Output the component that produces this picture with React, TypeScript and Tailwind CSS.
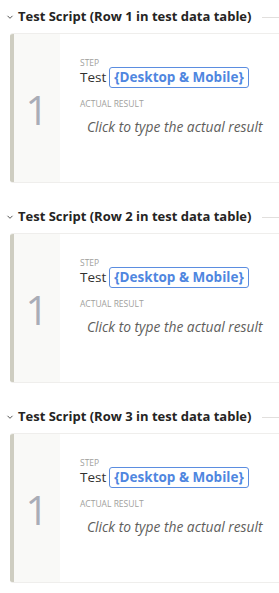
import React from 'react';

const rows = [1, 2, 3];

const Chevron = () => (
  <svg width="8" height="8" viewBox="0 0 8 8" className="shrink-0">
    <path d="M1.5 2.8 L4 5.3 L6.5 2.8" fill="none" stroke="#555" strokeWidth="1" />
  </svg>
);

const ScriptCard: React.FC<{ row: number }> = ({ row }) => (
  <section className="pt-[9px]">
    <div className="flex items-center h-[16px] pl-[6px]">
      <Chevron />
      <h2 className="ml-[4px] text-[13px] font-bold text-[#252423] whitespace-nowrap">
        Test Script (Row {row} in test data table)
      </h2>
      <div className="flex-1 ml-[11px] h-px bg-[#e1dfdd]" />
    </div>
    <div className="mt-[8px] ml-[10px] flex h-[150px] border-y border-[#efeeec] rounded-l-[3px] overflow-hidden">
      <div className="w-[50px] shrink-0 bg-[#f9f9f7] border-l-4 border-[#cecdc1] flex items-center justify-center pt-[4px]">
        <span className="text-[40px] font-normal text-[#a9adb7] leading-none">1</span>
      </div>
      <div className="flex-1 bg-white pl-[20px] pt-[24px]">
        <div className="text-[8.5px] uppercase text-[#a19f9d] leading-[10px]">Step</div>
        <div className="flex items-center mt-[-1px] h-[21px]">
          <span className="text-[13.5px] text-[#323130]">Test</span>
          <span className="ml-[3px] border border-[#5b8de0] rounded-[3px] px-[4px] h-[21px] flex items-center text-[13.5px] font-bold text-[#4f86e0]">
            {'{Desktop & Mobile}'}
          </span>
        </div>
        <div className="mt-[11px] text-[8.5px] uppercase text-[#a19f9d] leading-[10px]">Actual Result</div>
        <div className="mt-[8px] pl-[7px] text-[13.8px] italic text-[#605e5c] whitespace-nowrap">
          Click to type the actual result
        </div>
      </div>
    </div>
  </section>
);

export default function App() {
  return (
    <div
      className="w-[279px] h-[593px] overflow-hidden bg-white"
      style={{ fontFamily: '"Open Sans", "Noto Sans", sans-serif' }}
    >
      <div className="flex flex-col gap-[17px]">
        {rows.map((r) => (
          <ScriptCard key={r} row={r} />
        ))}
      </div>
    </div>
  );
}
